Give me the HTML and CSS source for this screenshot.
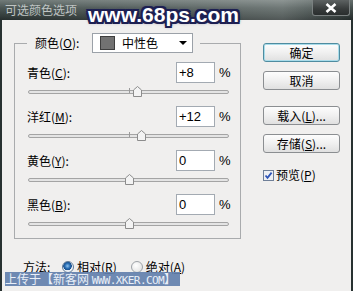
FILE: index.html
```html
<!DOCTYPE html>
<html>
<head>
    <meta charset="utf-8">
    <title>可选颜色选项</title>
    <link rel="stylesheet" href="styles.css">
</head>
<body>
    <div class="window">
        <div class="titlebar">
            <span class="title">可选颜色选项</span>
            <span class="close">
                <svg width="12" height="10" viewBox="0 0 12 10"><path d="M1.5 1 L10.5 9 M10.5 1 L1.5 9" stroke="#fff" stroke-width="2.6" fill="none"/></svg>
            </span>
            <div class="site-mark">www.68ps.com</div>
        </div>

        <div class="dialog">
            <div class="main">
                <fieldset class="group">
                    <legend class="group-head">
                        <span class="head-label">颜色(<u>O</u>):</span>
                        <div class="select">
                            <span class="swatch"></span>
                            <span class="select-text">中性色</span>
                            <span class="caret"></span>
                        </div>
                    </legend>

                    <div class="channel">
                        <div class="channel-top">
                            <span class="channel-label">青色(<u>C</u>):</span>
                            <input class="num" type="text" value="+8">
                            <span class="pct">%</span>
                        </div>
                        <div class="slider">
                            <div class="track">
                                <span class="tick"></span>
                                <svg class="thumb" style="left: 104px" width="9" height="11" viewBox="0 0 9 11"><path d="M0.5 4 L4.5 0.5 L8.5 4 L8.5 10.5 L0.5 10.5 Z" fill="#f3f3f3" stroke="#8c8c8c"/></svg>
                            </div>
                        </div>
                    </div>

                    <div class="channel">
                        <div class="channel-top">
                            <span class="channel-label">洋红(<u>M</u>):</span>
                            <input class="num" type="text" value="+12">
                            <span class="pct">%</span>
                        </div>
                        <div class="slider">
                            <div class="track">
                                <span class="tick"></span>
                                <svg class="thumb" style="left: 108px" width="9" height="11" viewBox="0 0 9 11"><path d="M0.5 4 L4.5 0.5 L8.5 4 L8.5 10.5 L0.5 10.5 Z" fill="#f3f3f3" stroke="#8c8c8c"/></svg>
                            </div>
                        </div>
                    </div>

                    <div class="channel">
                        <div class="channel-top">
                            <span class="channel-label">黄色(<u>Y</u>):</span>
                            <input class="num" type="text" value="0">
                            <span class="pct">%</span>
                        </div>
                        <div class="slider">
                            <div class="track">
                                <span class="tick"></span>
                                <svg class="thumb" style="left: 96px" width="9" height="11" viewBox="0 0 9 11"><path d="M0.5 4 L4.5 0.5 L8.5 4 L8.5 10.5 L0.5 10.5 Z" fill="#f3f3f3" stroke="#8c8c8c"/></svg>
                            </div>
                        </div>
                    </div>

                    <div class="channel">
                        <div class="channel-top">
                            <span class="channel-label">黑色(<u>B</u>):</span>
                            <input class="num" type="text" value="0">
                            <span class="pct">%</span>
                        </div>
                        <div class="slider">
                            <div class="track">
                                <span class="tick"></span>
                                <svg class="thumb" style="left: 96px" width="9" height="11" viewBox="0 0 9 11"><path d="M0.5 4 L4.5 0.5 L8.5 4 L8.5 10.5 L0.5 10.5 Z" fill="#f3f3f3" stroke="#8c8c8c"/></svg>
                            </div>
                        </div>
                    </div>
                </fieldset>

                <div class="side">
                    <button class="btn btn-default">确定</button>
                    <button class="btn btn-cancel">取消</button>
                    <button class="btn btn-load">载入(<u>L</u>)...</button>
                    <button class="btn btn-save">存储(<u>S</u>)...</button>
                    <label class="check">
                        <svg width="11" height="11" viewBox="0 0 11 11"><rect x="0.5" y="0.5" width="10" height="10" fill="#eef0f4" stroke="#6f7f98"/><path d="M2.5 5.5 L4.5 7.8 L8.6 2.6" stroke="#2f55b8" stroke-width="1.8" fill="none"/></svg>
                        <span>预览(<u>P</u>)</span>
                    </label>
                </div>
            </div>

            <div class="method">
                <span class="method-label">方法:</span>
                <span class="radio radio-on"></span>
                <span class="radio-text">相对(<u>R</u>)</span>
                <span class="radio"></span>
                <span class="radio-text">绝对(<u>A</u>)</span>
            </div>
        </div>

        <div class="upload-mark">上传于【新客网 <span class="mono">WWW.XKER.COM</span>】</div>
    </div>
</body>
</html>
```

FILE: styles.css
```css
body {
    margin: 0;
    font-family: "Noto Sans CJK SC", sans-serif;
    font-size: 12px;
    line-height: 14px;
    color: #000;
    background: #f0efee;
}

.window {
    position: relative;
    width: 353px;
    height: 291px;
    overflow: hidden;
    background: #f0efee;
}

/* title bar */

.titlebar {
    position: relative;
    display: flex;
    align-items: flex-start;
    height: 20px;
    background:
        linear-gradient(to right, rgba(0, 0, 0, 0) 0%, rgba(255, 255, 255, 0.12) 55%, rgba(255, 255, 255, 0.2) 80%, rgba(0, 0, 0, 0.1) 100%),
        linear-gradient(to bottom, #717b79 0%, #4b5654 40%, #333d3b 80%, #262e2d 100%);
}

.title {
    padding: 3px 0 0 5px;
    color: #bfc4c3;
    font-size: 12px;
    line-height: 14px;
}

.close {
    display: flex;
    align-items: center;
    justify-content: center;
    box-sizing: border-box;
    width: 38px;
    height: 16px;
    margin-left: auto;
    margin-right: 3px;
    background: linear-gradient(to bottom, #5d6262, #373b3b 60%, #2a2e2e);
    border: 1px solid #7a8080;
    border-top: 0;
    border-radius: 0 0 3px 3px;
}

.site-mark {
    position: absolute;
    left: 88px;
    top: 2px;
    font-family: "Liberation Sans", Arial, sans-serif;
    font-weight: bold;
    font-size: 21px;
    line-height: 26px;
    color: #fff;
    text-shadow:
        2px 0 0 #1d2052, -2px 0 0 #1d2052, 0 2px 0 #1d2052, 0 -2px 0 #1d2052,
        2px 2px 0 #1d2052, -2px -2px 0 #1d2052, 2px -2px 0 #1d2052, -2px 2px 0 #1d2052,
        0 0 4px #1d2052;
}

/* dialog */

.dialog {
    box-sizing: border-box;
    height: 271px;
    padding: 13px 0 0 12px;
    border-left: 2px solid #273130;
    border-right: 2px solid #273130;
}

.main {
    display: flex;
    align-items: flex-start;
}

.group {
    box-sizing: border-box;
    width: 227px;
    min-width: 0;
    margin: 0;
    padding: 9px 10px 0 12px;
    border: 1px solid #a9abad;
}

.group-head {
    display: flex;
    align-items: center;
    height: 20px;
    padding: 0 7px 0 8px;
}

.head-label {
    width: 57px;
}

.select {
    display: flex;
    align-items: center;
    box-sizing: border-box;
    width: 101px;
    height: 20px;
    padding-left: 7px;
    background: #fff;
    border: 1px solid #9ba1a8;
}

.swatch {
    box-sizing: border-box;
    width: 15px;
    height: 14px;
    background: #727272;
    border: 1px solid #3e3e3e;
}

.select-text {
    margin-left: 7px;
    flex: 1;
}

.caret {
    width: 0;
    height: 0;
    margin-right: 5px;
    border-left: 4px solid transparent;
    border-right: 4px solid transparent;
    border-top: 4px solid #000;
}

.channel {
    height: 44px;
}

.channel-top {
    display: flex;
    align-items: center;
    height: 21px;
}

.channel-label {
    flex: 1;
}

.num {
    box-sizing: border-box;
    width: 39px;
    height: 21px;
    margin: 0;
    padding: 0 0 0 2px;
    font-family: "Liberation Sans", Arial, sans-serif;
    font-size: 13px;
    color: #000;
    background: #fff;
    border: 1px solid #a3aab2;
    outline: none;
}

.pct {
    width: 15px;
    padding-left: 4px;
    box-sizing: border-box;
    font-family: "Liberation Sans", Arial, sans-serif;
    font-size: 13px;
}

.slider {
    display: flex;
    align-items: center;
    height: 18px;
    padding-left: 1px;
}

.track {
    position: relative;
    box-sizing: border-box;
    width: 201px;
    height: 4px;
    background: #e4e4e4;
    border: 1px solid #a4a4a4;
    border-radius: 2px;
}

.tick {
    position: absolute;
    left: 100px;
    top: -3px;
    width: 1px;
    height: 5px;
    background: #9a9a9a;
}

.thumb {
    position: absolute;
    top: -5px;
}

/* buttons */

.side {
    display: flex;
    flex-direction: column;
    align-items: flex-start;
    margin: 10px 0 0 22px;
}

.btn {
    box-sizing: border-box;
    width: 77px;
    height: 19px;
    margin: 0;
    padding: 0;
    font-family: "Noto Sans CJK SC", sans-serif;
    font-size: 12px;
    line-height: 14px;
    color: #000;
    background: linear-gradient(to bottom, #fdfdfd, #f0f0f0 50%, #e0e0e0);
    border: 1px solid #8b8e91;
    border-radius: 3px;
}

.btn-default {
    border-color: #4f8ca0;
    box-shadow: inset 0 0 0 1px #a9dcea;
}

.btn-cancel {
    margin-top: 9px;
}

.btn-load {
    margin-top: 16px;
}

.btn-save {
    margin-top: 9px;
}

.check {
    display: flex;
    align-items: center;
    gap: 2px;
    margin-top: 15px;
}

/* method row */

.method {
    display: flex;
    align-items: center;
    height: 14px;
    margin-top: 21px;
    padding-left: 9px;
}

.method-label {
    width: 39px;
}

.radio {
    box-sizing: border-box;
    width: 12px;
    height: 12px;
    border-radius: 50%;
    background: radial-gradient(circle at 40% 35%, #ffffff, #dcdcdc);
    border: 1px solid #9ea3a8;
}

.radio-on {
    background: radial-gradient(circle at 45% 40%, #8fc3ee 0, #2b6fb4 2.5px, #184f8e 4px, #e8eef5 4.5px, #f6f6f6 6px);
    border-color: #5f7a96;
}

.radio-text {
    margin: 0 14px 0 3px;
}

/* bottom watermark */

.upload-mark {
    position: absolute;
    left: 5px;
    top: 272px;
    width: 175px;
    height: 14px;
    background: rgba(99, 128, 172, 0.92);
    color: #e9eff8;
    font-size: 12px;
    line-height: 14px;
    white-space: nowrap;
}

.mono {
    font-family: "DejaVu Sans Mono", monospace;
    font-size: 11px;
    letter-spacing: -0.6px;
}
```
